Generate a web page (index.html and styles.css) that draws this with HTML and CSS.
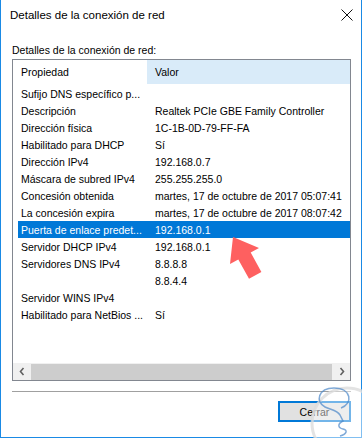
FILE: index.html
```html
<!DOCTYPE html>
<html lang="es">
<head>
    <meta charset="UTF-8">
    <title>Detalles de la conexión de red</title>
    <link rel="stylesheet" href="styles.css">
</head>
<body>
    <div class="window">
        <div class="titlebar">
            <span class="title">Detalles de la conexión de red</span>
            <svg class="close" width="12" height="12" viewBox="0 0 12 12">
                <path d="M0.5 0.5 L11.5 11.5 M11.5 0.5 L0.5 11.5" stroke="#111" stroke-width="1"/>
            </svg>
        </div>
        <div class="content">
            <div class="label">Detalles de la conexión de red:</div>
            <div class="listview">
                <div class="lv-header">
                    <div class="hcol prop">Propiedad</div>
                    <div class="hcol val">Valor</div>
                </div>
                <div class="lv-rows">
                    <div class="row"><span class="c1">Sufijo DNS específico p...</span><span class="c2"></span></div>
                    <div class="row"><span class="c1">Descripción</span><span class="c2">Realtek PCIe GBE Family Controller</span></div>
                    <div class="row"><span class="c1">Dirección física</span><span class="c2">1C-1B-0D-79-FF-FA</span></div>
                    <div class="row"><span class="c1">Habilitado para DHCP</span><span class="c2">Sí</span></div>
                    <div class="row"><span class="c1">Dirección IPv4</span><span class="c2">192.168.0.7</span></div>
                    <div class="row"><span class="c1">Máscara de subred IPv4</span><span class="c2">255.255.255.0</span></div>
                    <div class="row"><span class="c1">Concesión obtenida</span><span class="c2">martes, 17 de octubre de 2017 05:07:41</span></div>
                    <div class="row"><span class="c1">La concesión expira</span><span class="c2">martes, 17 de octubre de 2017 08:07:42</span></div>
                    <div class="row selected"><span class="c1">Puerta de enlace predet...</span><span class="c2">192.168.0.1</span></div>
                    <div class="row"><span class="c1">Servidor DHCP IPv4</span><span class="c2">192.168.0.1</span></div>
                    <div class="row"><span class="c1">Servidores DNS IPv4</span><span class="c2">8.8.8.8</span></div>
                    <div class="row"><span class="c1"></span><span class="c2">8.8.4.4</span></div>
                    <div class="row"><span class="c1">Servidor WINS IPv4</span><span class="c2"></span></div>
                    <div class="row"><span class="c1">Habilitado para NetBios ...</span><span class="c2">Sí</span></div>
                </div>
                <div class="hscroll">
                    <div class="sb-btn">
                        <svg width="6" height="9" viewBox="0 0 6 9"><path d="M4.5 1 L1.5 4.5 L4.5 8" fill="none" stroke="#606060" stroke-width="1.6"/></svg>
                    </div>
                    <div class="sb-track"><div class="thumb"></div></div>
                    <div class="sb-btn">
                        <svg width="6" height="9" viewBox="0 0 6 9"><path d="M1.5 1 L4.5 4.5 L1.5 8" fill="none" stroke="#606060" stroke-width="1.6"/></svg>
                    </div>
                </div>
            </div>
            <div class="sep"></div>
            <div class="buttons">
                <button class="btn">Cerrar</button>
            </div>
        </div>

        <!-- flecha roja sobre la puerta de enlace -->
        <svg class="overlay" width="362" height="438" viewBox="0 0 362 438">
            <polygon points="233,237 259,248 250.7,252.6 261.4,272 249,278.8 238.3,259.4 230,264" fill="#fe6060"/>
        </svg>
        <!-- marca de agua -->
        <svg class="overlay" width="362" height="438" viewBox="0 0 362 438">
            <circle cx="347" cy="423" r="35" fill="#fff" fill-opacity="0.45" stroke="#dcdcdc" stroke-width="3" stroke-opacity="0.8"/>
            <path d="M341 408 C353 404 352 388 334 388 C318 388 315 402 325 407 C331 410 337 410 340 415 L343 421 C337 424 338 428 343 429 C348 430 347 434 340 436" fill="none" stroke="#4a86c8" stroke-opacity="0.7" stroke-width="1.5"/>
        </svg>
    </div>
</body>
</html>
```

FILE: styles.css
```css
body {
    margin: 0;
    background: #fff;
    font-family: "Liberation Sans", Arial, sans-serif;
    font-size: 10.5px;
    color: #000;
}

.window {
    position: relative;
    width: 362px;
    height: 438px;
    box-sizing: border-box;
    border: 1px solid #1a8ae5;
    border-top: none;
    display: flex;
    flex-direction: column;
}

.titlebar {
    height: 30px;
    display: flex;
    align-items: center;
    justify-content: space-between;
    padding: 0 8px 0 9px;
}

.title {
    font-size: 11.5px;
}

.content {
    padding: 0 10px 0 11px;
}

.label {
    margin-top: 12px;
    height: 16px;
    line-height: 16px;
    margin-bottom: 1px;
}

.listview {
    height: 322px;
    box-sizing: border-box;
    border: 1px solid #828790;
    display: flex;
    flex-direction: column;
}

.lv-header {
    display: flex;
    height: 24px;
    margin-bottom: 1px;
}

.hcol {
    line-height: 24px;
    padding-left: 8px;
    box-sizing: border-box;
}

.hcol.prop {
    width: 134px;
}

.hcol.val {
    flex: 1;
    background: #d9ebf9;
}

.lv-rows {
    flex: 1;
}

.row {
    display: flex;
    height: 17px;
    line-height: 18px;
    margin-left: 5px;
    white-space: nowrap;
}

.row.selected {
    background: #0078d7;
    color: #fff;
}

.c1 {
    width: 137px;
    padding-left: 3px;
    box-sizing: border-box;
    overflow: hidden;
}

.c2 {
    flex: 1;
    overflow: hidden;
}

.hscroll {
    height: 17px;
    display: flex;
    background: #f0f0f0;
}

.sb-btn {
    width: 17px;
    display: flex;
    align-items: center;
    justify-content: center;
}

.sb-track {
    flex: 1;
    padding: 1px 1px 0 1px;
}

.thumb {
    height: 100%;
    background: #cdcdcd;
}

.sep {
    height: 1px;
    background: #a0a0a0;
    margin-top: 10px;
}

.buttons {
    display: flex;
    justify-content: flex-end;
    margin-top: 9px;
}

.btn {
    width: 73px;
    height: 21px;
    padding: 0;
    border: 2px solid #0078d7;
    background: #e1e1e1;
    font: inherit;
    color: #000;
}

.overlay {
    position: absolute;
    left: -1px;
    top: 0;
    pointer-events: none;
}
```
